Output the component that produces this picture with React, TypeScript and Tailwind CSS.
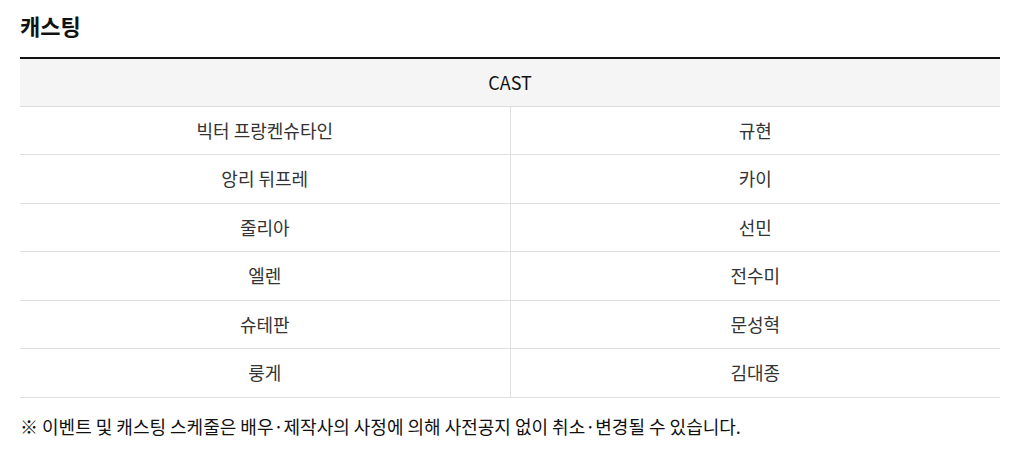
const cast = [
  ["빅터 프랑켄슈타인", "규현"],
  ["앙리 뒤프레", "카이"],
  ["줄리아", "선민"],
  ["엘렌", "전수미"],
  ["슈테판", "문성혁"],
  ["룽게", "김대종"],
];

export default function App() {
  return (
    <div
      className="w-[1025px] h-[451px] bg-white text-[#222]"
      style={{ fontFamily: '"Noto Sans CJK KR", "Noto Sans", sans-serif' }}
    >
      <div className="ml-[20px] w-[980px] pt-[10px]">
        <h2 className="text-[22px] leading-[30px] font-bold text-[#111]">캐스팅</h2>

        <table className="mt-[17px] w-full border-collapse border-t-2 border-[#111] text-[18px] text-[#333]">
          <thead>
            <tr>
              <th
                colSpan={2}
                className="h-[48px] bg-[#f5f5f5] border-b border-[#dcdcdc] font-normal text-[#111] text-center"
              >
                CAST
              </th>
            </tr>
          </thead>
          <tbody>
            {cast.map(([role, actor]) => (
              <tr key={role} className="h-[48.5px] border-b border-[#e0e0e0]">
                <td className="w-1/2 text-center border-r border-[#e0e0e0]">{role}</td>
                <td className="w-1/2 text-center">{actor}</td>
              </tr>
            ))}
          </tbody>
        </table>

        <p className="mt-[15px] text-[18px] leading-[26px] text-[#111]">
          ※ 이벤트 및 캐스팅 스케줄은 배우·제작사의 사정에 의해 사전공지 없이 취소·변경될 수 있습니다.
        </p>
      </div>
    </div>
  );
}
